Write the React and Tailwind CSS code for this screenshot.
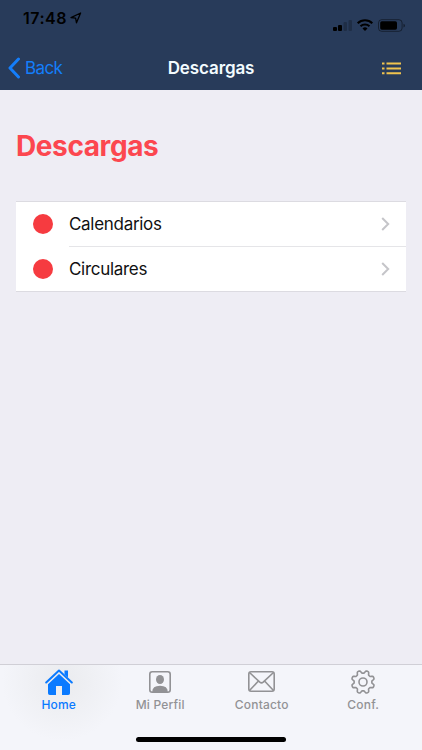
const gear = (() => {
  const pts = [];
  for (let i = 0; i < 96; i++) {
    const a = (i / 96) * Math.PI * 2;
    const w = Math.cos(8 * (a - Math.PI / 8));
    const r = 10.2 + 1.4 * Math.tanh(2.2 * w);
    pts.push(`${(13 + r * Math.cos(a)).toFixed(2)} ${(13 + r * Math.sin(a)).toFixed(2)}`);
  }
  return `M${pts.join("L")}Z`;
})();

function StatusBar() {
  return (
    <div className="flex h-[45px] items-start justify-between pl-[23px] pr-[15px] text-black">
      <div className="flex pt-[9px]">
        <span className="text-[16px] leading-[18px] font-semibold tracking-[0.5px]">17:48</span>
        <svg className="ml-[3px] mt-[3px]" width="12" height="12" viewBox="0 0 12 12" fill="none" stroke="currentColor" strokeWidth="1.3" strokeLinejoin="round">
          <path d="M1 5.6 10.6 1 6.5 10.8 5.6 6.1Z" />
        </svg>
      </div>
      <svg className="mt-[18px]" width="74" height="14" viewBox="0 0 74 14">
        <rect x="0" y="9" width="4" height="4" rx="1" />
        <rect x="5" y="7" width="4" height="6" rx="1" />
        <rect x="10.5" y="4" width="3.5" height="9" rx="1" opacity=".22" />
        <rect x="15.5" y="2" width="3.5" height="11" rx="1" opacity=".22" />
        <g fill="none" stroke="currentColor" strokeWidth="2.1">
          <path d="M24.7 5.2a10.6 10.6 0 0 1 14.6 0M27.5 8.3a6.7 6.7 0 0 1 9 0" />
        </g>
        <path d="m32 13-2.5-2.6a3.7 3.7 0 0 1 5 0Z" />
        <rect x="45.5" y="1.7" width="23.6" height="11.6" rx="3.2" fill="none" stroke="currentColor" opacity=".45" />
        <rect x="47.2" y="3.3" width="16.8" height="8.4" rx="1.6" />
        <path d="M70.5 5.7q1.5.5 1.5 1.9t-1.5 1.9Z" opacity=".5" />
      </svg>
    </div>
  );
}

function Row({ label, last }) {
  return (
    <div className={`flex items-stretch pl-[17px] ${last ? "h-[44px]" : "h-[45px]"}`}>
      <span className="mr-[16px] mt-[12px] size-[20px] rounded-full bg-[#f63b40]" />
      <div className={`flex flex-1 justify-between pr-[16px] ${last ? "" : "border-b-[1.5px] border-[#e5e5e8]"}`}>
        <span className="pt-[10px] text-[17px] leading-[24px] tracking-[-0.3px] text-[#111]">{label}</span>
        <svg className="mt-[15px]" width="9" height="14" viewBox="0 0 9 14" fill="none" stroke="#c5c5c9" strokeWidth="2">
          <path d="m1.2 1 6 6-6 6" />
        </svg>
      </div>
    </div>
  );
}

function Tab({ label, active, children }) {
  return (
    <div className={`flex flex-1 flex-col items-center ${active ? "text-[#0a7aff]" : "text-[#929295]"}`}>
      <div className="flex h-[32px] items-start pt-[4px]">{children}</div>
      <span className="text-[12px] leading-[16px] font-medium tracking-[0.2px]">{label}</span>
    </div>
  );
}

export default function App() {
  return (
    <div className="flex h-[750px] w-[422px] flex-col overflow-hidden bg-[#eeedf4] font-['Inter','Liberation_Sans',sans-serif]">
      <header className="h-[90px] bg-[#283b5a]">
        <StatusBar />
        <div className="grid h-[45px] grid-cols-3 items-center pl-[8px] pr-[21px]">
          <div className="flex items-center text-[#147efb]">
            <svg width="13" height="22" viewBox="0 0 13 22" fill="none" stroke="currentColor" strokeWidth="3" strokeLinecap="round" strokeLinejoin="round">
              <path d="M10.500 2 2 11l8.500 9" />
            </svg>
            <span className="ml-[4px] text-[17px] leading-[24px] tracking-[-0.6px]">Back</span>
          </div>
          <h1 className="ml-[13px] text-center text-[17px] leading-[24px] font-semibold tracking-[-0.1px] text-[#f3fbff]">Descargas</h1>
          <svg className="mt-[1px] justify-self-end" width="19" height="13" viewBox="0 0 19 13" fill="none" stroke="#f0c34e" strokeWidth="2">
            <path d="M0 1.500h2.500M4.500 1.500H19M0 6.500h2.500M4.500 6.500H19M0 11.200h2.500M4.500 11.200H19" />
          </svg>
        </div>
      </header>

      <main className="flex-1 px-[16px]">
        <h2 className="pt-[38px] text-[28px] leading-[36px] font-bold tracking-[-0.4px] text-[#fc474f]">Descargas</h2>
        <div className="mt-[37px] border-y border-[#dcdbe1] bg-white">
          <Row label="Calendarios" />
          <Row label="Circulares" last />
        </div>
      </main>

      <footer className="flex h-[86px] flex-col items-center border-t border-[#d0cfd6] bg-[#f4f5fa] bg-[radial-gradient(circle_at_62px_16px,#eaebee_0px,#f4f5fa_60px)]">
        <div className="flex w-full px-[8px]">
          <Tab label="Home" active>
            <svg width="28" height="27" viewBox="0 0 28 27" fill="currentColor">
              <path d="M19.500 1.500h3.500v7l-3.500-3.200Z" />
              <path d="M1.200 13.500 14 1.500l12.800 12" fill="none" stroke="currentColor" strokeWidth="2" strokeLinecap="round" strokeLinejoin="round" />
              <path d="m14 4.900 11 10.300v9q0 1.800-1.800 1.800H17v-9h-6v9H4.800Q3 26 3 24.200v-9Z" />
            </svg>
          </Tab>
          <Tab label="Mi Perfil">
            <svg className="mt-[2px]" width="22" height="22" viewBox="0 0 22 22" fill="currentColor">
              <rect x=".8" y=".8" width="20.400" height="20.400" rx="2.400" fill="none" stroke="currentColor" strokeWidth="1.600" />
              <ellipse cx="11" cy="8.500" rx="4" ry="4.500" />
              <path d="M3.200 21q0-6.200 7.800-6.200T18.800 21Z" />
            </svg>
          </Tab>
          <Tab label="Contacto">
            <svg className="mt-[2px]" width="27" height="21" viewBox="0 0 27 21" fill="none" stroke="currentColor" strokeWidth="1.600" strokeLinejoin="round">
              <rect x=".8" y=".8" width="25.400" height="19.400" rx="2.200" />
              <path d="m1.500 1.500 10.300 9.700q1.700 1.400 3.400 0L25.500 1.500M1.500 19.500l8.700-9.200M25.500 19.500l-8.700-9.200" />
            </svg>
          </Tab>
          <Tab label="Conf.">
            <svg width="26" height="26" viewBox="0 0 26 26" fill="none" stroke="currentColor" strokeWidth="1.600" strokeLinejoin="round">
              <path d={gear} />
              <circle cx="13" cy="13" r="4" />
            </svg>
          </Tab>
        </div>
        <div className="mt-[24px] h-[5px] w-[150px] rounded-full bg-black" />
      </footer>
    </div>
  );
}
